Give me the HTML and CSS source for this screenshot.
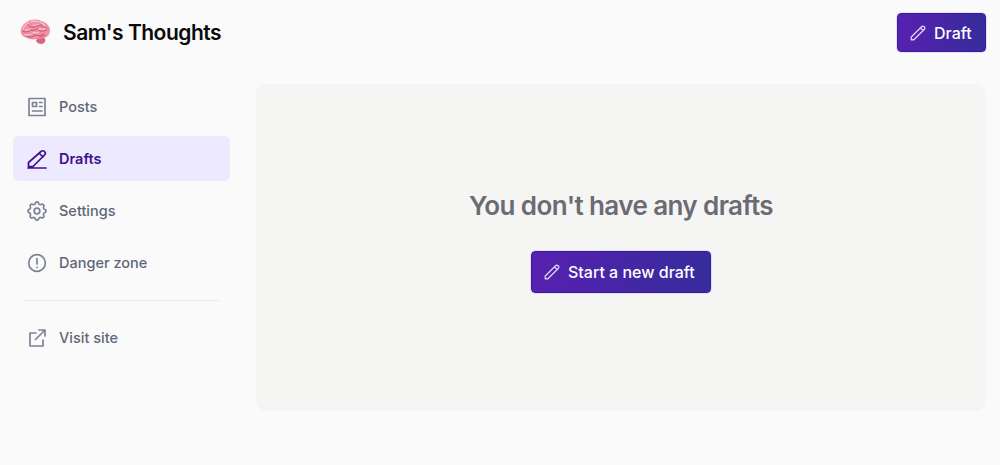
FILE: index.html
```html
<!DOCTYPE html>
<html lang="en">
  <head>
    <meta charset="utf-8">
    <title>Sam's Thoughts — Drafts</title>
    <link rel="stylesheet" href="styles.css">
  </head>
  <body>
    <header class="topbar">
      <a class="brand" href="#">
        <svg class="brain" viewBox="0 0 32 28" width="32" height="28">
          <path fill="#d9647f" d="M19 20c2-1 6-1 7 1 1 2-1 5-3.500 5s-4.500-1-5.500-3c0-1 1-2 2-3z"/>
          <path fill="#ee8fa5" d="M2 15C1 10 4 6 8 4c4-3 10-3 14-1 5 1 9 5 9 9 0 4-2 7-6 8-1 0-2 0-3 .5-2 .5-3 .5-5 .5-3 1-7 0-9-1-3-1-5-2-6-5z"/>
          <path fill="none" stroke="#f9c3cd" stroke-width="1.300" stroke-linecap="round" d="M4 11c1-3 3-5 6-6M12 3.500c2-.5 5-.5 7 0M21 4.500c2 .5 4 2 5 3.500M7 12c2 .5 3 0 5-1M14 7.500c2 .5 3 0 5-1M20 11c2 .5 4 .5 6 0M6 16.500c2 .5 4 .5 6-.5M14 14.500c2 .5 4 .5 6-.5"/>
          <path fill="none" stroke="#c9557a" stroke-width="1" stroke-linecap="round" d="M4 13.500c3 1 5 .5 8-1.500M12 12c3 1 5 0 7-2M19 12.500c3 1 6 .5 9-.5M9 6.500c1 2 3 3 6 2.500M15 9c2-1 4-2 7-1M22 6c.5 2 2 3.500 5 3.500M8 18.500c3 1 6 .5 8-1.500M16 17c3 1 6 1 9-1M21 19c1-.5 3-1 5-1.500"/>
        </svg>
        <span class="brand-name">Sam's Thoughts</span>
      </a>
      <a class="btn btn-top" href="#">
        <svg class="icon-sm" viewBox="0 0 24 24"><path d="M15.200 5.200l3.600 3.600M16.700 3.700a2.500 2.500 0 0 1 3.600 3.600L6.500 21H3v-3.600L16.700 3.700z"/></svg>
        Draft
      </a>
    </header>

    <div class="layout">
      <nav class="sidebar">
        <a class="nav-item" href="#">
          <svg class="icon" viewBox="0 0 24 24"><path d="M4 3.500h16v17H4zM7.500 7.500h4v4h-4zM14.500 7.500h2.500M14.500 11.500h2.500M7.500 16h9.500"/></svg>
          Posts
        </a>
        <a class="nav-item active" href="#">
          <svg class="icon" viewBox="0 0 24 24"><path d="M14.500 6.500l3.500 3.500M16 4.500a2.400 2.400 0 0 1 3.500 3.500L8 19.500H3.500V15.500L16 4.500zM3 21h18"/></svg>
          Drafts
        </a>
        <a class="nav-item" href="#">
          <svg class="icon" viewBox="0 0 24 24"><path d="M10.300 4.300c.4-1.800 3-1.800 3.400 0a1.700 1.700 0 0 0 2.600 1.100c1.500-.9 3.300.8 2.400 2.400a1.700 1.700 0 0 0 1 2.500c1.800.4 1.800 3 0 3.400a1.700 1.700 0 0 0-1 2.600c.9 1.500-.9 3.300-2.400 2.400a1.700 1.700 0 0 0-2.600 1c-.4 1.800-3 1.800-3.400 0a1.700 1.700 0 0 0-2.600-1c-1.500.9-3.300-.9-2.400-2.400a1.700 1.700 0 0 0-1-2.600c-1.800-.4-1.800-3 0-3.400a1.700 1.700 0 0 0 1-2.500c-.9-1.600.9-3.300 2.400-2.400a1.700 1.700 0 0 0 2.600-1.100z"/><circle cx="12" cy="12" r="2.800"/></svg>
          Settings
        </a>
        <a class="nav-item" href="#">
          <svg class="icon" viewBox="0 0 24 24"><circle cx="12" cy="12" r="8.300"/><path d="M12 7.500v5.500M12 16.300v.1"/></svg>
          Danger zone
        </a>
        <hr class="divider">
        <a class="nav-item" href="#">
          <svg class="icon" viewBox="0 0 24 24"><path d="M11 7H5v13h13v-6M10.500 13.500L19.500 4.500M14 4h6v6"/></svg>
          Visit site
        </a>
      </nav>

      <main class="panel">
        <h2 class="empty-title">You don't have any drafts</h2>
        <a class="btn btn-start" href="#">
          <svg class="icon-sm" viewBox="0 0 24 24"><path d="M15.200 5.200l3.600 3.600M16.700 3.700a2.500 2.500 0 0 1 3.600 3.600L6.500 21H3v-3.600L16.700 3.700z"/></svg>
          Start a new draft
        </a>
      </main>
    </div>
  </body>
</html>
```

FILE: styles.css
```css
html {
    font-family: Inter, "Liberation Sans", sans-serif;
    background: #fafafa;
}

body {
    margin: 0;
    height: 465px;
    overflow: hidden;
}

a {
    text-decoration: none;
    color: inherit;
}

.topbar {
    display: flex;
    justify-content: space-between;
    align-items: center;
    padding: 13px 14px 0 19px;
}

.brand {
    display: flex;
    align-items: center;
    gap: 12px;
    margin-top: -1px;
}

.brand-name {
    font-size: 21px;
    font-weight: 600;
    letter-spacing: -0.5px;
    color: #0a0a0a;
}

.btn {
    display: flex;
    align-items: center;
    box-sizing: border-box;
    border: 1px solid #3a1aa0;
    border-radius: 4px;
    background: linear-gradient(to right, #5720b0, #362c9c);
    color: #fff;
    font-weight: 500;
    box-shadow: 0 0 0 1px rgba(124, 92, 220, 0.15);
}

.btn-top {
    height: 39px;
    width: 89px;
    padding-left: 11px;
    gap: 7px;
    font-size: 16px;
}

.btn-start {
    height: 42px;
    width: 180px;
    padding-left: 11px;
    gap: 7px;
    font-size: 16px;
}

.icon-sm {
    width: 18px;
    height: 18px;
    fill: none;
    stroke: #ddd0f7;
    stroke-width: 1.800;
    stroke-linejoin: round;
    stroke-linecap: round;
}

.layout {
    display: flex;
    padding: 32px 14px 0 13px;
    gap: 26px;
}

.sidebar {
    width: 217px;
    flex: none;
    display: flex;
    flex-direction: column;
    gap: 7px;
}

.nav-item {
    display: flex;
    align-items: center;
    height: 45px;
    padding-left: 12px;
    gap: 10px;
    border-radius: 6px;
    font-size: 14.500px;
    font-weight: 500;
    color: #5f6678;
}

.icon {
    width: 24px;
    height: 24px;
    flex: none;
    fill: none;
    stroke: #7b8294;
    stroke-width: 1.700;
    stroke-linejoin: round;
    stroke-linecap: round;
}

.active {
    background: #ede9fe;
    color: #41108f;
    font-weight: 600;
}

.active .icon {
    stroke: #41108f;
}

.divider {
    width: 195px;
    margin: 8px 0 7px 11px;
    border: 0;
    border-top: 1px solid #e7e7e7;
}

.panel {
    flex: 1;
    height: 327px;
    border-radius: 10px;
    background: #f5f5f4;
    display: flex;
    flex-direction: column;
    align-items: center;
    justify-content: center;
    padding-bottom: 13px;
    box-sizing: border-box;
}

.empty-title {
    margin: 0 0 29px;
    font-size: 26px;
    line-height: 32px;
    font-weight: 600;
    letter-spacing: -0.6px;
    color: #6b6b73;
}
```
